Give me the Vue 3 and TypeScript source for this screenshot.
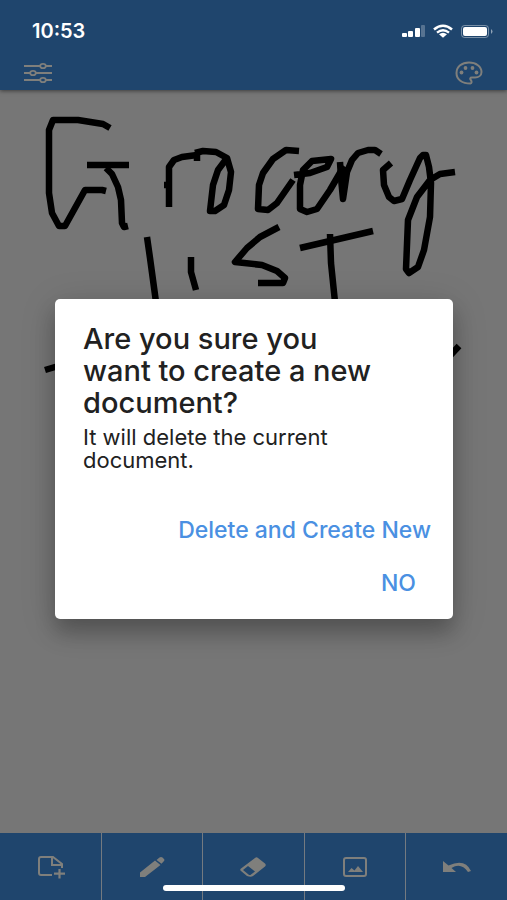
<script setup lang="ts">
import { ref } from 'vue'

type Tool = 'new' | 'pencil' | 'eraser' | 'image' | 'undo'

const tools: { id: Tool; label: string }[] = [
  { id: 'new', label: 'New document' },
  { id: 'pencil', label: 'Pencil' },
  { id: 'eraser', label: 'Eraser' },
  { id: 'image', label: 'Insert image' },
  { id: 'undo', label: 'Undo' },
]

const initialStrokes: string[] = [
  // G
  '110,128 103,124 78,120 53,120 49,130 49,193 52,213 59,226 65,226 85,190 102,190 106,191',
  '87,165 129,165',
  '106,168 112,174 118,187 121,200 122,223 124,227 128,226',
  // r
  '169,207 169,167 174,160 182,157 197,155 197,161',
  '164,185 168,185',
  // o
  '195,153 203,151 216,152 227,158 231,172 229,190 224,205 215,211 210,211 213,185 218,170 227,158',
  // c
  '299,151 286,150 273,159 263,173 259,185 258,209 268,210 277,203 293,180',
  // e
  '294,175 310,173 327,167 331,159 312,161 303,170 300,185 300,209 307,212 317,209 330,190 344,166',
  // r
  '340,162 341,178 343,199 347,172 352,160 358,153 368,150 375,150 381,154',
  // y
  '391,163 383,170 384,185 389,197 394,201 402,199 410,180 420,158 423,155 426,155 429,167 431,183 430,217 424,250 418,267 409,273 406,269 408,220 417,197 430,180 440,174 455,172',
  // l
  '147,237 150,258 156,302',
  // i
  '191,257 191,272 196,290',
  // s
  '279,227 260,237 247,248 235,262 262,265 277,271 285,278 283,283 258,283',
  // t
  '300,248 373,231',
  '330,234 331,263 335,302',
  // third line
  '45,370 75,361',
  '459,346 446,360',
]

const strokes = ref<string[]>(initialStrokes)
const dialogOpen = ref(true)

function clearDocument() {
  strokes.value = []
  dialogOpen.value = false
}

function useTool(id: Tool) {
  if (id === 'new') dialogOpen.value = true
  if (id === 'undo') strokes.value = strokes.value.slice(0, -1)
}
</script>

<template>
  <div class="app">
    <header class="header">
      <div class="status">
        <span class="time">10:53</span>
        <svg class="signals" viewBox="0 0 92 16" aria-hidden="true">
          <g fill="#fff">
            <rect x="1" y="10" width="5" height="4" rx="1" />
            <rect x="7" y="8" width="5" height="6" rx="1" />
            <rect x="14" y="5" width="5" height="9" rx="1" />
            <rect x="20" y="2" width="4" height="12" rx="1" opacity=".25" />
            <path d="M38 11.300q4-3.200 8 0l-4 3.400z" />
            <rect x="62" y="4" width="24" height="9" rx="2" />
            <path d="M90 6q3 2.500 0 5z" opacity=".5" />
          </g>
          <g fill="none" stroke="#fff">
            <path d="M33 6.500q9-7.500 18 0" stroke-width="2.600" />
            <path d="M36 9.700q6-5 12 0" stroke-width="2.300" />
            <rect x="60.500" y="2.500" width="27" height="12" rx="3" opacity=".4" />
          </g>
        </svg>
      </div>
      <div class="topbar">
        <button class="icon-button" type="button" aria-label="Settings">
          <svg width="28" height="22" viewBox="0 0 28 22" fill="none" stroke="currentColor" stroke-width="1.800">
            <path d="M0 4H16M22 4H28M0 11H6M12 11H28M0 18H16M22 18H28" />
            <ellipse cx="19" cy="4" rx="2.800" ry="2.200" />
            <ellipse cx="9" cy="11" rx="2.800" ry="2.200" />
            <ellipse cx="19" cy="18" rx="2.800" ry="2.200" />
          </svg>
        </button>
        <button class="icon-button" type="button" aria-label="Colors">
          <svg width="28" height="24" viewBox="0 0 28 24">
            <path d="M15.500 22.500C7 22.500 1.500 18.500 1.500 12 1.500 5.500 7 1.500 14 1.500s12.500 4 12.500 9.500c0 3.500-3 5.500-6.500 5.500h-3c-2 0-2.300 1.300-1.200 2.500 1.200 1.400 1 3.500-.3 3.500z" fill="none" stroke="currentColor" stroke-width="2" />
            <g fill="currentColor">
              <circle cx="6.500" cy="11.500" r="1.900" />
              <circle cx="10.500" cy="7" r="1.900" />
              <circle cx="17.500" cy="7" r="1.900" />
              <circle cx="21.500" cy="11.500" r="1.900" />
            </g>
          </svg>
        </button>
      </div>
    </header>

    <main class="canvas">
      <svg class="drawing" viewBox="0 90 507 320" role="img" aria-label="Handwritten drawing">
        <polyline v-for="(points, i) in strokes" :key="i" :points="points" />
      </svg>
    </main>

    <nav class="toolbar">
      <button v-for="tool in tools" :key="tool.id" class="tool" type="button" :aria-label="tool.label" @click="useTool(tool.id)">
        <svg v-if="tool.id === 'new'" width="30" height="24" viewBox="-2 0 30 24" fill="none" stroke="currentColor">
          <path d="M15 20H4Q2 20 2 18V4Q2 2 4 2H16L25 9V13M15 2V10H25" stroke-width="2" />
          <path d="M22.500 14V23.500M17 18.700H28" stroke-width="2.200" />
        </svg>
        <svg v-else-if="tool.id === 'pencil'" width="26" height="22" viewBox="0 0 26 22" fill="currentColor">
          <path d="M1 16.500 16 4.500 21.500 9 6 21H1zM17.500 4 20.500 1.500Q22 .5 23.500 1.500L25 3Q26 4 25 5L22.500 7.800z" />
        </svg>
        <svg v-else-if="tool.id === 'eraser'" width="28" height="22" viewBox="0 0 28 22">
          <path d="M16 2Q17.500 .5 19 2L26 7.500Q27.500 9 26 10.500L14 20Q12 21.500 8 20L2 15Q.5 13.500 2 12.500z" fill="currentColor" />
          <path class="eraser-tip" d="M9 10 16 15.500 12 18.500Q11 19.500 9.500 18.500L4 14z" />
        </svg>
        <svg v-else-if="tool.id === 'image'" width="26" height="22" viewBox="0 0 26 22">
          <rect x="2" y="2" width="22" height="18" rx="2" fill="none" stroke="currentColor" stroke-width="2" />
          <path d="M6 16 9.500 12 12.500 14.500 16 10 21 16z" fill="currentColor" />
        </svg>
        <svg v-else width="30" height="22" viewBox="0 0 30 22">
          <path d="M1 5V16H14L9.500 12Q19 6 26 16L29 15Q23 2 6.500 9.500z" fill="currentColor" />
        </svg>
      </button>
    </nav>

    <div v-if="dialogOpen" class="overlay">
      <section class="dialog" role="alertdialog" aria-modal="true" aria-labelledby="dialog-title" aria-describedby="dialog-text">
        <h1 id="dialog-title" class="title">Are you sure you<br />want to create a new<br />document?</h1>
        <p id="dialog-text" class="text">It will delete the current document.</p>
        <div class="actions">
          <button class="action" type="button" @click="clearDocument">Delete and Create New</button>
          <button class="action action-no" type="button" @click="dialogOpen = false">NO</button>
        </div>
      </section>
    </div>
    <div class="home-indicator"></div>
  </div>
</template>

<style>
body {
  margin: 0;
  background: #767676;
}
</style>

<style scoped>
.app {
  position: relative;
  display: flex;
  flex-direction: column;
  min-height: 100vh;
  background: #767676;
  font-family: Inter, "Liberation Sans", sans-serif;
}

button {
  border: 0;
  padding: 0;
  background: none;
  color: inherit;
  font: inherit;
  cursor: pointer;
}

svg {
  display: block;
}

.header {
  background: #1f456d;
  color: #7f7f7c;
  box-shadow: 0 1px 4px rgba(0, 0, 0, 0.5);
}

.status {
  display: flex;
  align-items: center;
  justify-content: space-between;
  height: 60px;
  padding: 2px 14px 0 32px;
  box-sizing: border-box;
}

.time {
  color: #fff;
  font-size: 20px;
  font-weight: 600;
}

.signals {
  width: 92px;
  height: 16px;
}

.topbar {
  display: flex;
  align-items: flex-start;
  justify-content: space-between;
  height: 30px;
  padding: 0 24px;
}

.icon-button {
  display: flex;
  align-items: center;
  height: 25px;
}

.canvas {
  flex: 1;
}

.drawing {
  width: 100%;
}

.drawing polyline {
  fill: none;
  stroke: #000;
  stroke-width: 6.5;
  stroke-linejoin: round;
}

.toolbar {
  display: flex;
  height: 67px;
  background: #1f456d;
  color: #7f7f7c;
}

.tool {
  display: flex;
  flex: 1;
  align-items: center;
  justify-content: center;
}

.tool + .tool {
  border-left: 1px solid #747a80;
}

.eraser-tip {
  fill: #1f456d;
}

.overlay {
  position: absolute;
  inset: 0;
  display: flex;
  align-items: center;
  justify-content: center;
  padding: 18px 54px 0 55px;
}

.dialog {
  box-sizing: border-box;
  width: 100%;
  padding: 24px 22px 10px 28px;
  border-radius: 5px;
  background: #fff;
  color: #212121;
  box-shadow: 0 14px 20px rgba(0, 0, 0, 0.22), 0 6px 36px rgba(0, 0, 0, 0.15);
}

.title {
  margin: 0;
  font-size: 29px;
  font-weight: 500;
  line-height: 32px;
}

.text {
  margin: 7px 0 0;
  font-size: 22px;
  line-height: 23px;
}

.actions {
  display: flex;
  flex-direction: column;
  align-items: flex-end;
  margin-top: 31px;
}

.action {
  height: 53px;
  color: #4a90e2;
  font-size: 23px;
  font-weight: 500;
}

.action-no {
  padding: 0 15px;
}

.home-indicator {
  position: absolute;
  bottom: 9px;
  left: 50%;
  width: 182px;
  height: 6px;
  border-radius: 3px;
  background: #fff;
  transform: translateX(-50%);
}
</style>
